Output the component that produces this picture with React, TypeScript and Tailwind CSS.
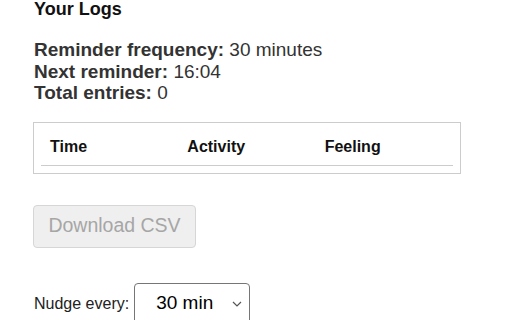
import { useState } from "react";

const columns = ["Time", "Activity", "Feeling"];

export default function App() {
  const [interval, setInterval] = useState("30");

  return (
    <div className="h-[320px] w-[512px] overflow-hidden bg-white pl-[33px] font-['Liberation_Sans',Arial,sans-serif]">
      <h3 className="pl-[1px] text-[18px] font-bold leading-[18px] text-[#111]">Your Logs</h3>

      <div className="mt-[21px] pl-[1px] text-[19px] leading-[21.5px] text-[#333]">
        <p>
          <span className="font-bold">Reminder frequency:</span> 30 minutes
        </p>
        <p>
          <span className="font-bold">Next reminder:</span> 16:04
        </p>
        <p>
          <span className="font-bold">Total entries:</span> 0
        </p>
      </div>

      <div className="mt-[18px] w-[428px] border border-[#cccccc] p-[7px]">
        <div className="grid h-[36px] grid-cols-3 items-center border-b border-[#cccccc]">
          {columns.map((col) => (
            <span key={col} className="pl-[9px] text-[16px] font-bold text-[#111]">
              {col}
            </span>
          ))}
        </div>
      </div>

      <button
        className="mt-[31px] flex h-[43px] w-[163px] items-center justify-center rounded-[4px] border border-[#d6d6d6] bg-[#efefef] text-[19.5px] text-[#a6a6a6]"
        disabled
      >
        Download CSV
      </button>

      <div className="mt-[35px] flex items-baseline gap-[5px] pl-[1px]">
        <label className="text-[16px] text-[#222]">Nudge every:</label>
        <div className="relative">
          <select
            className="h-[42px] w-[116px] appearance-none rounded-[4px] border border-[#767676] bg-white pl-[21px] text-[19px] text-black outline-none"
            value={interval}
            onChange={(e) => setInterval(e.target.value)}
          >
            <option value="15">15 min</option>
            <option value="30">30 min</option>
            <option value="60">60 min</option>
          </select>
          <svg
            className="pointer-events-none absolute right-[8px] top-[18px]"
            width="10"
            height="6"
            viewBox="0 0 10 6"
            fill="none"
          >
            <path d="M1 1l4 4 4-4" stroke="#555" strokeWidth="1.2" />
          </svg>
        </div>
      </div>
    </div>
  );
}
